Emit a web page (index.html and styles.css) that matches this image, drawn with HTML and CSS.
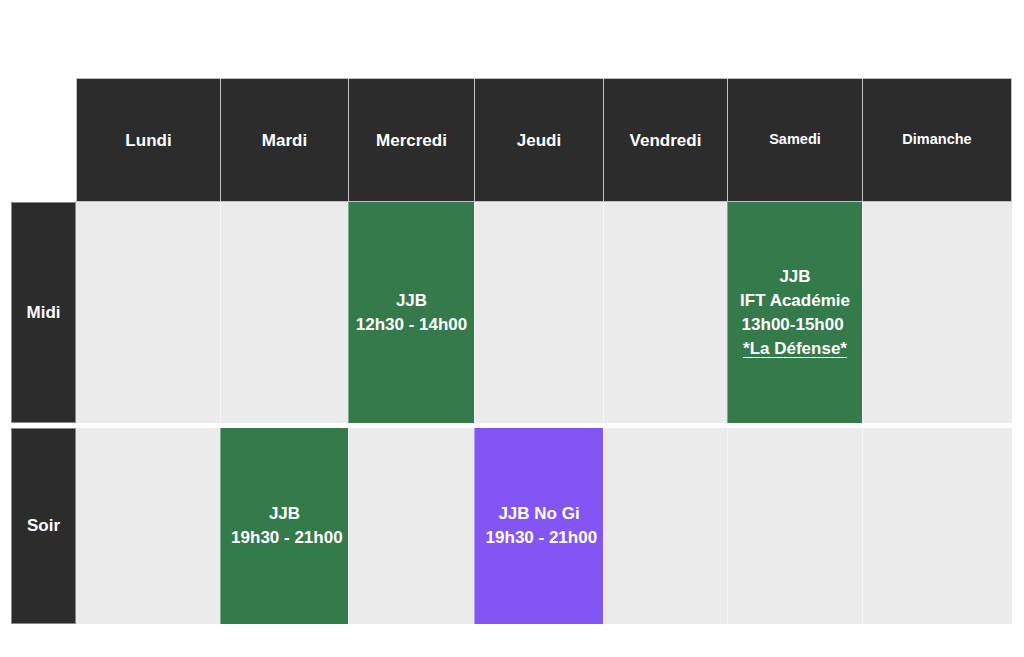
FILE: index.html
```html
<!DOCTYPE html>
<html lang="fr">
<head>
<meta charset="utf-8">
<title>Planning</title>
<link rel="stylesheet" href="styles.css">
</head>
<body>
<div class="schedule">
  <div class="row head">
    <div class="corner"></div>
    <div class="day">Lundi</div>
    <div class="day">Mardi</div>
    <div class="day">Mercredi</div>
    <div class="day">Jeudi</div>
    <div class="day">Vendredi</div>
    <div class="day small">Samedi</div>
    <div class="day small">Dimanche</div>
  </div>
  <div class="row midi">
    <div class="label">Midi</div>
    <div class="cell"></div>
    <div class="cell"></div>
    <div class="cell green"><p class="txt">JJB<br>12h30 - 14h00</p></div>
    <div class="cell"></div>
    <div class="cell"></div>
    <div class="cell green"><p class="txt">JJB<br>IFT Académie<br>13h00-15h00&nbsp;<br><u>*La Défense*</u></p></div>
    <div class="cell"></div>
  </div>
  <div class="row soir">
    <div class="label">Soir</div>
    <div class="cell"></div>
    <div class="cell green"><p class="txt">JJB<br>&nbsp;19h30 - 21h00</p></div>
    <div class="cell"></div>
    <div class="cell purple"><p class="txt">JJB No Gi<br>&nbsp;19h30 - 21h00</p></div>
    <div class="cell"></div>
    <div class="cell"></div>
    <div class="cell"></div>
  </div>
</div>
</body>
</html>
```
FILE: styles.css
```css
html, body {
  margin: 0;
  padding: 0;
  background: #ffffff;
  font-family: "Liberation Sans", Arial, sans-serif;
}

.schedule {
  padding: 78px 0 0 11px;
}

.row {
  display: grid;
  grid-template-columns: 65px 144px 128px 126px 129px 124px 135px 150px;
}

.head {
  height: 124px;
}

.midi {
  height: 221px;
}

.soir {
  height: 196px;
  margin-top: 5px;
}

.corner {
  background: #ffffff;
}

.day {
  background: #2c2c2c;
  color: #ffffff;
  font-weight: bold;
  font-size: 17px;
  display: flex;
  align-items: center;
  justify-content: center;
  border-top: 1px solid #c2c2c2;
  border-bottom: 1px solid #c2c2c2;
  border-left: 1px solid #c2c2c2;
  padding-top: 1px;
}

.day:last-child {
  border-right: 1px solid #c2c2c2;
}

.day.small {
  font-size: 14.5px;
  padding-top: 0;
  padding-bottom: 2px;
}

.label {
  background: #2c2c2c;
  color: #ffffff;
  font-weight: bold;
  font-size: 17px;
  display: flex;
  align-items: center;
  justify-content: center;
  border: 1px solid #8a8a8a;
}

.cell {
  background: #ebebeb;
  border-left: 1px solid #f7f7f7;
  display: flex;
  align-items: center;
  justify-content: center;
}

.label + .cell {
  border-left: none;
}

.txt {
  margin: 0;
  color: #ffffff;
  font-weight: bold;
  font-size: 17px;
  line-height: 24px;
  text-align: center;
}

.cell.green {
  background: #357a4a;
  border-left-color: #7fae8e;
}

.cell.purple {
  background: #8455f5;
  border-left-color: #b49af8;
}

.txt u {
  text-decoration-thickness: 1px;
  text-underline-offset: 3px;
}
```
